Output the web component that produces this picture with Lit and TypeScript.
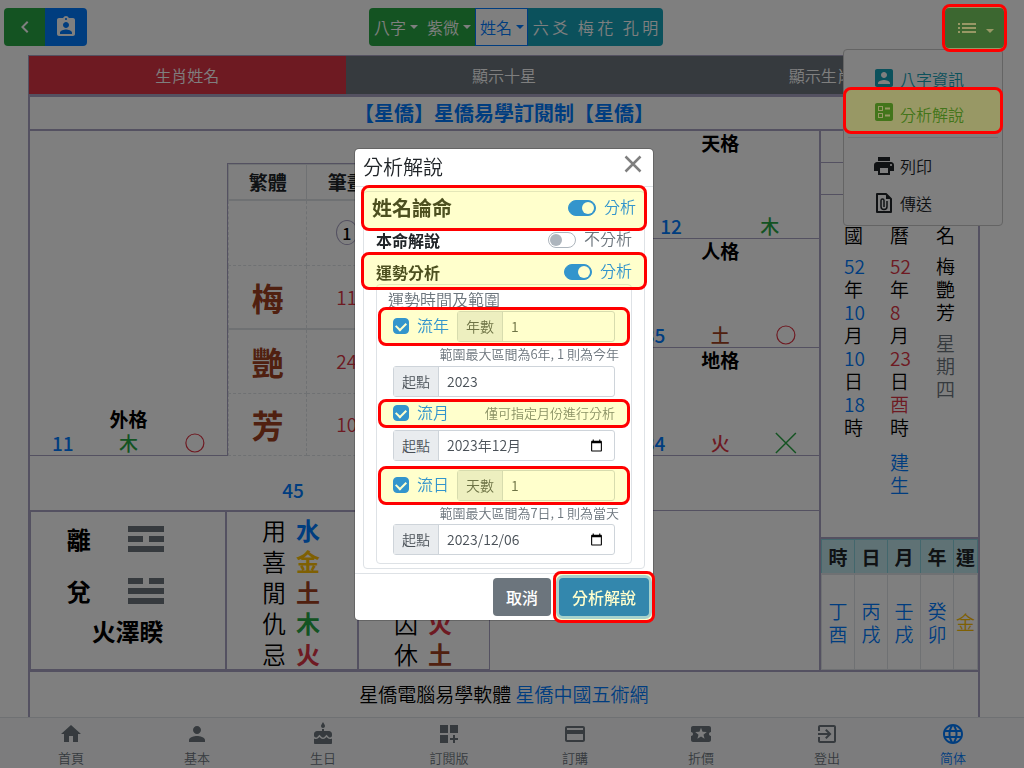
import { LitElement, html, css, svg } from "lit";
import { customElement } from "lit/decorators.js";

const ICONS: Record<string, string> = {
  back: "M15.41 7.41L14 6l-6 6 6 6 1.41-1.41L10.83 12z",
  profile:
    "M19 3h-4.18C14.4 1.84 13.3 1 12 1c-1.3 0-2.4.84-2.82 2H5c-1.1 0-2 .9-2 2v14c0 1.1.9 2 2 2h14c1.1 0 2-.9 2-2V5c0-1.1-.9-2-2-2zm-7 0c.55 0 1 .45 1 1s-.45 1-1 1-1-.45-1-1 .45-1 1-1zm0 4c1.66 0 3 1.34 3 3s-1.34 3-3 3-3-1.34-3-3 1.34-3 3-3zm6 12H6v-1.4c0-2 4-3.1 6-3.1s6 1.1 6 3.1V19z",
  list: "M3 13h2v-2H3v2zm0 4h2v-2H3v2zm0-8h2V7H3v2zm4 4h14v-2H7v2zm0 4h14v-2H7v2zM7 7v2h14V7H7z",
  account:
    "M3 5v14c0 1.1.89 2 2 2h14c1.1 0 2-.9 2-2V5c0-1.1-.9-2-2-2H5c-1.11 0-2 .9-2 2zm12 4c0 1.66-1.34 3-3 3s-3-1.34-3-3 1.34-3 3-3 3 1.34 3 3zm-9 8c0-2 4-3.1 6-3.1s6 1.1 6 3.1v1H6v-1z",
  ballot:
    "M13 9.5h5v-2h-5v2zm0 7h5v-2h-5v2zm6 4.5H5c-1.1 0-2-.9-2-2V5c0-1.1.9-2 2-2h14c1.1 0 2 .9 2 2v14c0 1.1-.9 2-2 2zM6 11h5V6H6v5zm1-4h3v3H7V7zM6 18h5v-5H6v5zm1-4h3v3H7v-3z",
  print:
    "M19 8H5c-1.66 0-3 1.34-3 3v6h4v4h12v-4h4v-6c0-1.66-1.34-3-3-3zm-3 11H8v-5h8v5zm3-7c-.55 0-1-.45-1-1s.45-1 1-1 1 .45 1 1-.45 1-1 1zm-1-9H6v4h12V3z",
  home: "M10 20v-6h4v6h5v-8h3L12 3 2 12h3v8z",
  person:
    "M12 12c2.21 0 4-1.79 4-4s-1.79-4-4-4-4 1.79-4 4 1.79 4 4 4zm0 2c-2.67 0-8 1.34-8 4v2h16v-2c0-2.66-5.33-4-8-4z",
  cake: "M12 6c1.11 0 2-.9 2-2 0-.38-.1-.73-.29-1.03L12 0l-1.71 2.97c-.19.3-.29.65-.29 1.03 0 1.1.9 2 2 2zm4.6 9.99l-1.07-1.07-1.08 1.07c-1.3 1.3-3.58 1.31-4.89 0l-1.07-1.07-1.09 1.07C6.75 16.64 5.88 17 4.96 17c-.73 0-1.4-.23-1.96-.61V21c0 .55.45 1 1 1h16c.55 0 1-.45 1-1v-4.61c-.56.38-1.23.61-1.96.61-.92 0-1.79-.36-2.44-1.01zM18 9h-5V7h-2v2H6c-1.66 0-3 1.34-3 3v1.54c0 1.08.88 1.96 1.96 1.96.52 0 1.02-.2 1.38-.57l2.14-2.13 2.13 2.13c.74.74 2.03.74 2.77 0l2.14-2.13 2.13 2.13c.37.37.86.57 1.38.57 1.08 0 1.96-.88 1.96-1.96V12C21 10.34 19.66 9 18 9z",
  addTile: "M3 3h8v8H3zm10 0h8v8h-8zM3 13h8v8H3zm15 0h-2v3h-3v2h3v3h2v-3h3v-2h-3z",
  card: "M20 4H4c-1.11 0-1.99.89-1.99 2L2 18c0 1.11.89 2 2 2h16c1.11 0 2-.89 2-2V6c0-1.11-.89-2-2-2zm0 14H4v-6h16v6zm0-10H4V6h16v2z",
  ticket:
    "M20 12c0-1.1.9-2 2-2V6c0-1.1-.9-2-2-2H4c-1.1 0-1.99.9-1.99 2v4c1.1 0 1.99.9 1.99 2s-.89 2-2 2v4c0 1.1.9 2 2 2h16c1.1 0 2-.9 2-2v-4c-1.1 0-2-.9-2-2zm-4.42 4.8L12 14.5l-3.58 2.3 1.08-4.12-3.29-2.69 4.24-.25L12 5.8l1.54 3.95 4.24.25-3.29 2.69 1.09 4.11z",
  exit: "M10.09 15.59L11.5 17l5-5-5-5-1.41 1.41L12.67 11H3v2h9.67l-2.58 2.59zM19 3H5c-1.11 0-2 .9-2 2v4h2V5h14v14H5v-4H3v4c0 1.1.89 2 2 2h14c1.1 0 2-.9 2-2V5c0-1.1-.9-2-2-2z",
  globe:
    "M11.99 2C6.47 2 2 6.48 2 12s4.47 10 9.99 10C17.52 22 22 17.52 22 12S17.52 2 11.99 2zm6.93 6h-2.95c-.32-1.25-.78-2.45-1.38-3.56 1.84.63 3.37 1.91 4.33 3.56zM12 4.04c.83 1.2 1.48 2.53 1.91 3.96h-3.82c.43-1.43 1.08-2.76 1.91-3.96zM4.26 14C4.1 13.36 4 12.69 4 12s.1-1.36.26-2h3.38c-.08.66-.14 1.32-.14 2 0 .68.06 1.34.14 2H4.26zm.82 2h2.95c.32 1.25.78 2.45 1.38 3.56-1.84-.63-3.37-1.9-4.33-3.56zm2.95-8H5.08c.96-1.66 2.49-2.93 4.33-3.56C8.81 5.55 8.35 6.75 8.03 8zM12 19.96c-.83-1.2-1.48-2.53-1.91-3.96h3.82c-.43 1.43-1.08 2.76-1.91 3.96zM14.34 14H9.66c-.09-.66-.16-1.32-.16-2 0-.68.07-1.35.16-2h4.68c.09.65.16 1.32.16 2 0 .68-.07 1.34-.16 2zm.25 5.56c.6-1.11 1.06-2.31 1.38-3.56h2.95c-.96 1.65-2.49 2.93-4.33 3.56zM16.36 14c.08-.66.14-1.32.14-2 0-.68-.06-1.34-.14-2h3.38c.16.64.26 1.31.26 2s-.1 1.36-.26 2h-3.38z",
  calendar:
    "M20 3h-1V1h-2v2H7V1H5v2H4c-1.1 0-2 .9-2 2v16c0 1.1.9 2 2 2h16c1.1 0 2-.9 2-2V5c0-1.1-.9-2-2-2zm0 18H4V8h16v13z",
};

const icon = (name: string, size = 24) => svg`
  <svg class="icon" width=${size} height=${size} viewBox="0 0 24 24" fill="currentColor" aria-hidden="true">
    <path d=${ICONS[name]}></path>
  </svg>`;

const attachIcon = svg`
  <svg class="icon" width="24" height="24" viewBox="0 0 24 24" fill="none" stroke="currentColor" stroke-width="2" aria-hidden="true">
    <path d="M5 3h9l5 5v13H5z" stroke-linejoin="round"></path>
    <path d="M14 3l5 5h-5z" fill="currentColor" stroke="none"></path>
    <path d="M9 10v5.500a3 3 0 0 0 6 0V10M12 16V9.500a1.500 1.500 0 0 0-3 0V12" stroke-width="1.500"></path>
  </svg>`;

const font = css`
  :host {
    box-sizing: border-box;
    font-family: "Noto Sans CJK TC", "Noto Sans", sans-serif;
    font-weight: 350;
    font-size: 16px;
    line-height: 24px;
    color: #212529;
  }
  * {
    box-sizing: border-box;
  }
  button,
  input {
    font: inherit;
    color: inherit;
    margin: 0;
  }
  button {
    border: 0;
    padding: 0;
    background: none;
    cursor: pointer;
  }
  a {
    color: #007bff;
    text-decoration: none;
  }
  .icon {
    display: block;
    flex: none;
  }
  .mark {
    position: relative;
  }
  .mark::after {
    content: "";
    position: absolute;
    inset: var(--mark-inset, -4px);
    border: 3px solid #f00;
    border-radius: 8px;
    background: rgba(255, 255, 0, 0.2);
    pointer-events: none;
    z-index: 20;
  }
`;

@customElement("top-bar")
class TopBar extends LitElement {
  static styles = [
    font,
    css`
      :host {
        display: flex;
        justify-content: space-between;
        padding: 8px 20px 8px 4px;
        height: 55px;
        color: #fff;
      }
      .group {
        display: flex;
        height: 38px;
        border-radius: 4px;
        overflow: hidden;
      }
      .nav {
        width: 41px;
        display: grid;
        place-items: center;
        background: #28a745;
      }
      .nav.blue {
        width: 42px;
        background: #007bff;
      }
      .tab {
        width: 53px;
        padding-left: 4px;
        display: flex;
        align-items: center;
        gap: 4px;
        background: #28a745;
        border: 1px solid transparent;
      }
      .tab.on {
        background: #fff;
        color: #007bff;
        border-color: #007bff;
      }
      .plain {
        width: 45px;
        background: #17a2b8;
      }
      .caret {
        border: 4px solid transparent;
        border-top-color: currentColor;
        border-bottom: 0;
      }
      .menu-wrap {
        position: relative;
      }
      .toggle {
        display: flex;
        align-items: center;
        justify-content: center;
        gap: 7px;
        width: 59px;
        height: 40px;
        border-radius: 4px;
        background: #188478;
        --mark-inset: -4px -3px;
      }
      .toggle .caret {
        margin-top: 5px;
      }
      .menu {
        position: absolute;
        top: 41px;
        right: 1px;
        width: 160px;
        padding: 10px 4px 4px;
        background: #fff;
        border: 1px solid #c8c8c8;
        border-radius: 4px;
        color: #212529;
      }
      .item {
        display: flex;
        align-items: center;
        gap: 4px;
        width: 100%;
        height: 37px;
        padding-left: 24px;
      }
      .info {
        color: #17a2b8;
        height: 35px;
      }
      .go {
        color: #28a745;
        height: 34px;
        --mark-inset: -8px -5px -5px;
      }
      .info span,
      .go span {
        padding-top: 3px;
      }
      .line {
        border: 0;
        border-top: 1px solid #e2e5e8;
        margin: 8px 0 9px;
      }
    `,
  ];
  render() {
    return html`
      <div class="group">
        <button class="nav" aria-label="返回">${icon("back")}</button>
        <button class="nav blue" aria-label="命主">${icon("profile")}</button>
      </div>
      <nav class="group">
        <button class="tab">八字<i class="caret"></i></button>
        <button class="tab">紫微<i class="caret"></i></button>
        <button class="tab on">姓名<i class="caret"></i></button>
        <button class="plain">六 爻</button>
        <button class="plain">梅 花</button>
        <button class="plain">孔 明</button>
      </nav>
      <div class="menu-wrap">
        <button class="toggle mark" aria-label="選單" aria-expanded="true">
          ${icon("list")}<i class="caret"></i>
        </button>
        <div class="menu">
          <button class="item info">${icon("account")}<span>八字資訊</span></button>
          <button class="item go mark">${icon("ballot")}<span>分析解說</span></button>
          <hr class="line" />
          <button class="item">${icon("print")}<span>列印</span></button>
          <button class="item">${attachIcon}<span>傳送</span></button>
        </div>
      </div>
    `;
  }
}

const COLORS: Record<string, string> = {
  水: "blue",
  金: "gold",
  土: "brown",
  木: "green",
  火: "red",
};

@customElement("name-chart")
class NameChart extends LitElement {
  static styles = [
    font,
    css`
      :host {
        display: block;
        --line: #a8a2c2;
        color: #000;
        border: 1px solid var(--line);
        border-width: 1px 1px 0;
        font-size: 19px;
      }
      .blue {
        color: #007bff;
      }
      .gold {
        color: #ffc107;
      }
      .brown {
        color: #a04020;
      }
      .green {
        color: #28a745;
      }
      .red {
        color: #dc3545;
      }
      .gray {
        color: #6c757d;
      }
      .tabs {
        display: grid;
        grid-template-columns: repeat(3, 1fr);
      }
      .tabs button {
        height: 38px;
        font-size: 16px;
        color: #fff;
        background: #6c757d;
      }
      .tabs .on {
        background: #dc3545;
      }
      .sheet {
        border: 1px solid var(--line);
        border-top-width: 3px;
        border-bottom: 0;
      }
      .title {
        margin: 0;
        font-size: 20px;
        font-weight: 700;
        line-height: 32px;
        text-align: center;
        border-bottom: 2px solid var(--line);
      }
      .cols {
        display: grid;
        grid-template-columns: minmax(0, 1fr) 159px;
        border-bottom: 2px solid var(--line);
      }
      .upper {
        display: grid;
        grid-template-columns: 1fr 2fr 1fr;
        height: 325px;
      }
      .cell {
        display: flex;
        flex-direction: column;
        justify-content: space-between;
        border-bottom: 1px solid var(--line);
        text-align: center;
        font-weight: 500;
      }
      .cell b {
        font-weight: 700;
      }
      .outer {
        justify-content: flex-end;
      }
      .nums {
        display: flex;
        height: 24px;
      }
      .nums span {
        flex: 1;
      }
      .mark-sign {
        height: 24px;
        flex: 1;
      }
      .right {
        display: grid;
        grid-template-rows: repeat(3, 1fr);
      }
      .names-wrap {
        border-left: 1px solid var(--line);
        border-top: 1px solid var(--line);
        margin-top: 32px;
      }
      .names {
        border-collapse: collapse;
        width: 100%;
        table-layout: fixed;
        height: 292px;
        text-align: center;
      }
      .names th {
        height: 35px;
        padding: 0;
        font-weight: 700;
        color: #212529;
        border: 1px solid #dee2e6;
        border-bottom-width: 2px;
      }
      .names td {
        padding: 0;
        border: 1px dashed #dee2e6;
      }
      .names .han {
        font-size: 32px;
        font-weight: 700;
      }
      .names .solid td {
        border-bottom: 2px solid #dee2e6;
      }
      .c1 {
        width: 78px;
      }
      .c2 {
        width: 80px;
      }
      .ring {
        display: inline-grid;
        place-items: center;
        width: 22px;
        height: 25px;
        border: 1px solid var(--line);
        border-radius: 50%;
        font-size: 16px;
        font-weight: 500;
      }
      .total {
        display: grid;
        grid-template-columns: 1fr 2fr 1fr;
        height: 54px;
      }
      .total .mid {
        grid-column: 2;
        display: flex;
        flex-direction: column;
        justify-content: space-between;
        text-align: center;
        font-weight: 500;
        padding-bottom: 8px;
      }
      .lower {
        display: grid;
        grid-template-columns: 3fr 2fr 2fr 5fr;
        height: 160px;
      }
      .box {
        border: 2px solid var(--line);
        border-width: 2px 2px 1px 0;
      }
      .rest {
        border-top: 1px solid var(--line);
      }
      .gua {
        display: grid;
        grid-template-columns: 24px 36px;
        grid-template-rows: 54px 50px 30px;
        column-gap: 37px;
        justify-content: center;
        align-items: center;
        padding-right: 26px;
        font-size: 24px;
        font-weight: 700;
        border-left: 1px solid var(--line);
      }
      .gua .name {
        grid-column: 1 / 3;
        text-align: right;
      }
      .elements {
        display: grid;
        grid-template-columns: 24px 24px;
        grid-auto-rows: 31px;
        column-gap: 10px;
        padding: 2px 2px 0 0;
        justify-content: center;
        font-size: 24px;
        line-height: 31px;
      }
      .elements b {
        font-weight: 700;
      }
      .thin {
        border-right-width: 1px;
      }
      .side {
        display: flex;
        flex-direction: column;
        border-left: 2px solid var(--line);
      }
      .slot {
        height: 32px;
        border-bottom: 1px solid var(--line);
      }
      .birth {
        flex: 1;
        display: grid;
        grid-template-columns: repeat(3, 19px);
        column-gap: 27px;
        justify-content: center;
        align-content: start;
        padding-top: 5px;
        border-bottom: 2px solid var(--line);
      }
      .birth div {
        line-height: 23px;
      }
      .birth p {
        margin: 0 0 8px;
      }
      .birth .far {
        margin: 12px 0 0;
      }
      .pillars {
        border-collapse: collapse;
        width: 100%;
        height: 131px;
        table-layout: fixed;
        text-align: center;
        line-height: 23px;
      }
      .pillars th {
        height: 34px;
        padding: 0;
        background: #bee5eb;
        border: 1px solid #86cfda;
        border-bottom: 2px solid #dee2e6;
        color: #212529;
        font-weight: 700;
      }
      .pillars td {
        padding: 0;
        border: 1px solid #dee2e6;
      }
      .last {
        width: 24px;
      }
      .foot {
        margin: 0;
        padding: 10px 0;
        text-align: center;
        height: 60px;
      }
    `,
  ];
  private grid(name: string, num: string, el: string, sign?: string) {
    return html`<div class="cell ${name === "外格" ? "outer" : ""}">
      <b>${name}</b>
      <div class="nums">
        <span class="blue">${num}</span>
        <span class=${COLORS[el]}>${el}</span>
        ${sign
          ? html`<svg class="mark-sign ${sign === "x" ? "green" : "red"}" viewBox="-12 -12 24 24" fill="none" stroke="currentColor">
              ${sign === "x"
                ? svg`<path d="M-10-10L10 10M10-10L-10 10" stroke-width="1.500"></path>`
                : svg`<circle r="9" stroke-width="1.200"></circle>`}
            </svg>`
          : ""}
      </div>
    </div>`;
  }
  private trigram(bits: number[]) {
    return svg`<svg class="icon gray" width="36" height="26" viewBox="0 0 36 26" fill="currentColor" aria-hidden="true">
      ${bits.map((b, i) =>
        b
          ? svg`<rect y=${i * 10} width="36" height="6"></rect>`
          : svg`<rect y=${i * 10} width="15" height="6"></rect><rect x="21" y=${i * 10} width="15" height="6"></rect>`
      )}
    </svg>`;
  }
  private elements(pairs: string[]) {
    return pairs.map((p) => html`<span>${p[0]}</span><b class=${COLORS[p[1]]}>${p[1]}</b>`);
  }
  render() {
    const han = [
      ["梅", "11"],
      ["艷", "24"],
      ["芳", "10"],
    ];
    return html`
      <div class="tabs">
        <button class="on">生肖姓名</button>
        <button>顯示十星</button>
        <button>顯示生肖</button>
      </div>
      <div class="sheet">
        <h1 class="title"><a href="#subscribe">【星僑】星僑易學訂閱制【星僑】</a></h1>
        <div class="cols">
          <div>
            <div class="upper">
              ${this.grid("外格", "11", "木", "o")}
              <div class="names-wrap">
                <table class="names">
                  <thead>
                    <tr>
                      <th class="c1">繁體</th>
                      <th class="c2">筆畫</th>
                      <th></th>
                    </tr>
                  </thead>
                  <tbody>
                    <tr>
                      <td></td>
                      <td><span class="ring">1</span></td>
                      <td></td>
                    </tr>
                    ${han.map(
                      ([h, n], i) => html`<tr class=${i === 0 ? "solid" : ""}>
                        <td class="han brown">${h}</td>
                        <td class="red">${n}</td>
                        <td></td>
                      </tr>`
                    )}
                  </tbody>
                </table>
              </div>
              <div class="right">
                ${this.grid("天格", "12", "木")} ${this.grid("人格", "35", "土", "o")}
                ${this.grid("地格", "34", "火", "x")}
              </div>
            </div>
            <div class="total">
              <div class="mid">
                <b></b>
                <div class="nums"><span class="blue">45</span><span></span><span></span></div>
              </div>
            </div>
            <div class="lower">
              <div class="box gua">
                <span>離</span>${this.trigram([1, 0, 1])} <span>兌</span>${this.trigram([0, 1, 1])}
                <span class="name">火澤睽</span>
              </div>
              <div class="box elements">${this.elements(["用水", "喜金", "閒土", "仇木", "忌火"])}</div>
              <div class="box thin elements">${this.elements(["旺金", "相水", "死木", "囚火", "休土"])}</div>
              <div class="rest"></div>
            </div>
          </div>
          <div class="side">
            <div class="slot"></div>
            <div class="slot"></div>
            <div class="birth">
              <div>
                <p>民<br />國</p>
                <span class="blue">52</span><br />年<br /><span class="blue">10</span><br />月<br /><span
                  class="blue"
                  >10</span
                ><br />日<br /><span class="blue">18</span><br />時
              </div>
              <div>
                <p>農<br />曆</p>
                <span class="red">52</span><br />年<br /><span class="red">8</span><br />月<br /><span class="red"
                  >23</span
                ><br />日<br /><span class="red">酉</span><br />時
                <p class="far blue">建<br />生</p>
              </div>
              <div>
                <p>姓<br />名</p>
                <p>梅<br />艷<br />芳</p>
                <span class="gray">星<br />期<br />四</span>
              </div>
            </div>
            <table class="pillars">
              <thead>
                <tr>
                  <th>時</th>
                  <th>日</th>
                  <th>月</th>
                  <th>年</th>
                  <th class="last">運</th>
                </tr>
              </thead>
              <tbody>
                <tr>
                  ${["丁酉", "丙戌", "壬戌", "癸卯"].map((p) => html`<td class="blue">${p[0]}<br />${p[1]}</td>`)}
                  <td class="gold">金</td>
                </tr>
              </tbody>
            </table>
          </div>
        </div>
        <p class="foot">星僑電腦易學軟體 <a href="#site">星僑中國五術網</a></p>
      </div>
    `;
  }
}

@customElement("tab-bar")
class TabBar extends LitElement {
  static styles = [
    font,
    css`
      :host {
        display: grid;
        grid-template-columns: repeat(8, 1fr);
        padding: 4px 8px 0;
        height: 51px;
        background: #f8f9fa;
        border-top: 1px solid #dee2e6;
      }
      a {
        display: flex;
        flex-direction: column;
        align-items: center;
        color: #6c757d;
        font-size: 13px;
      }
      .on {
        color: #007bff;
      }
    `,
  ];
  render() {
    const items = [
      ["home", "首頁"],
      ["person", "基本"],
      ["cake", "生日"],
      ["addTile", "訂閱版"],
      ["card", "訂購"],
      ["ticket", "折價"],
      ["exit", "登出"],
      ["globe", "简体"],
    ];
    return items.map(
      ([i, t]) => html`<a href="#${i}" class=${i === "globe" ? "on" : ""}>${icon(i)}<span>${t}</span></a>`
    );
  }
}

@customElement("analysis-dialog")
class AnalysisDialog extends LitElement {
  static styles = [
    font,
    css`
      :host {
        display: block;
        width: 300px;
        background: #fff;
        background-clip: padding-box;
        border: 1px solid rgba(0, 0, 0, 0.2);
        border-radius: 5px;
      }
      .head {
        display: flex;
        justify-content: space-between;
        align-items: center;
        height: 38px;
        padding: 0 8px;
        border-bottom: 1px solid #dee2e6;
      }
      h2,
      h3,
      h4 {
        margin: 0;
        font-size: 20px;
        font-weight: 350;
      }
      h3 {
        font-weight: 700;
      }
      h4 {
        font-size: 16px;
        font-weight: 700;
      }
      .x {
        color: #7f7f7f;
        padding: 0 3px 6px;
      }
      .body {
        padding: 4px 8px;
      }
      .card {
        border: 1px solid #dee2e6;
        border-radius: 4px;
        padding-bottom: 4px;
      }
      .row {
        display: flex;
        justify-content: space-between;
        align-items: center;
        height: 32px;
        padding: 0 12px;
      }
      .row.first {
        padding: 0 8px;
        --mark-inset: -7px -3px;
      }
      .row.luck {
        --mark-inset: -4px -3px -2px;
      }
      .switch {
        display: flex;
        align-items: center;
        gap: 8px;
        color: #6c757d;
      }
      .switch span,
      .tick span {
        padding-bottom: 3px;
      }
      .switch.on,
      .tick {
        color: #007bff;
      }
      .switch input,
      .tick input {
        appearance: none;
        display: grid;
        flex: none;
        width: 28px;
        height: 16px;
        border: 1px solid #adb5bd;
        border-radius: 8px;
        background: #fff;
      }
      .switch input::before {
        content: "";
        width: 12px;
        height: 12px;
        margin: 1px;
        border-radius: 6px;
        background: #adb5bd;
      }
      .switch input:checked,
      .tick input:checked {
        background: #007bff;
        border-color: #007bff;
      }
      .switch input:checked::before {
        background: #fff;
        justify-self: end;
      }
      .tick {
        display: flex;
        align-items: center;
        gap: 8px;
      }
      .tick input {
        width: 16px;
        border-radius: 4px;
        place-items: center;
      }
      .tick input:checked::before {
        content: "";
        width: 8px;
        height: 5px;
        border: solid #fff;
        border-width: 0 0 2px 2px;
        transform: translateY(-1px) rotate(-45deg);
      }
      .range {
        margin: -4px 12px 0;
        border: 1px solid #dee2e6;
        border-radius: 4px;
        padding: 2px 16px 8px;
      }
      .label {
        color: #6c757d;
        margin: 0 -5px;
      }
      .line {
        display: flex;
        justify-content: space-between;
        align-items: center;
        height: 31px;
        --mark-inset: -4px -15px;
      }
      .line.month {
        height: 33px;
        --mark-inset: 2px -15px;
      }
      .line .group {
        width: 158px;
      }
      .help {
        margin: 0 -4px 0 0;
        text-align: right;
        font-size: 13px;
        line-height: 24px;
        color: #6c757d;
      }
      .last {
        line-height: 23px;
      }
      .month .help {
        margin: 0;
      }
      .group {
        display: flex;
        height: 31px;
        font-size: 14px;
        border: 1px solid #ced4da;
        border-radius: 3px;
        color: #495057;
        background: #fff;
      }
      .group label {
        display: grid;
        place-items: center;
        width: 45px;
        background: #e9ecef;
        border-right: 1px solid #ced4da;
      }
      .group input {
        flex: 1;
        min-width: 0;
        border: 0;
        padding: 0 8px;
        background: transparent;
        outline: 0;
      }
      .group button {
        padding: 0 11px;
        color: #000;
      }
      .gap {
        margin-bottom: 9px;
      }
      .foot {
        display: flex;
        justify-content: flex-end;
        gap: 8px;
        padding: 4px;
        border-top: 1px solid #dee2e6;
      }
      .btn {
        height: 38px;
        padding: 0 13px;
        border-radius: 4px;
        color: #fff;
        font-weight: 500;
        background: #6c757d;
      }
      .primary {
        background: #0069d9;
        box-shadow: 0 0 0 3px rgba(38, 143, 255, 0.5);
        --mark-inset: -7px -6px;
      }
    `,
  ];
  private toggle(text: string, on: boolean) {
    return html`<label class="switch ${on ? "on" : ""}">
      <input type="checkbox" role="switch" .checked=${on} /><span>${text}</span>
    </label>`;
  }
  private tick(text: string) {
    return html`<label class="tick"><input type="checkbox" .checked=${true} /><span>${text}</span></label>`;
  }
  private field(id: string, label: string, value: string, picker = false) {
    return html`<div class="group">
      <label for=${id}>${label}</label>
      <input id=${id} type="text" .value=${value} />
      ${picker ? html`<button aria-label="選擇日期">${icon("calendar", 13)}</button>` : ""}
    </div>`;
  }
  render() {
    return html`
      <div class="head">
        <h2>分析解說</h2>
        <button class="x" aria-label="關閉">
          <svg class="icon" width="18" height="18" viewBox="0 0 18 18" fill="none" stroke="currentColor" stroke-width="2.500">
            <path d="M1.500 1.500l15 15M16.500 1.500l-15 15"></path>
          </svg>
        </button>
      </div>
      <div class="body">
        <div class="card">
          <div class="row first mark"><h3>姓名論命</h3>${this.toggle("分析", true)}</div>
          <div class="row"><h4>本命解說</h4>${this.toggle("不分析", false)}</div>
          <div class="row luck mark"><h4>運勢分析</h4>${this.toggle("分析", true)}</div>
          <div class="range">
            <div class="label">運勢時間及範圍</div>
            <div class="line mark">${this.tick("流年")}${this.field("years", "年數", "1")}</div>
            <p class="help">範圍最大區間為6年, 1 則為今年</p>
            ${this.field("year-start", "起點", "2023")}
            <div class="line month mark">
              ${this.tick("流月")}<span class="help">僅可指定月份進行分析</span>
            </div>
            ${this.field("month-start", "起點", "2023年12月", true)}
            <div class="gap"></div>
            <div class="line mark">${this.tick("流日")}${this.field("days", "天數", "1")}</div>
            <p class="help last">範圍最大區間為7日, 1 則為當天</p>
            ${this.field("day-start", "起點", "2023/12/06", true)}
          </div>
        </div>
      </div>
      <div class="foot">
        <button class="btn">取消</button>
        <button class="btn primary mark">分析解說</button>
      </div>
    `;
  }
}

@customElement("app-root")
class AppRoot extends LitElement {
  static styles = css`
    :host {
      display: flex;
      flex-direction: column;
      height: 100vh;
      overflow: hidden;
      background: #fff;
    }
    .page {
      flex: 1;
      min-height: 0;
      overflow: hidden;
      padding: 0 44px 0 28px;
    }
    .backdrop {
      position: fixed;
      inset: 0;
      z-index: 10;
      background: rgba(0, 0, 0, 0.5);
    }
    .layer {
      position: fixed;
      inset: 0;
      z-index: 30;
      display: grid;
      place-items: center;
      padding-right: 16px;
    }
  `;
  render() {
    return html`
      <top-bar></top-bar>
      <main class="page"><name-chart></name-chart></main>
      <tab-bar></tab-bar>
      <div class="backdrop"></div>
      <div class="layer"><analysis-dialog role="dialog" aria-label="分析解說"></analysis-dialog></div>
    `;
  }
}
